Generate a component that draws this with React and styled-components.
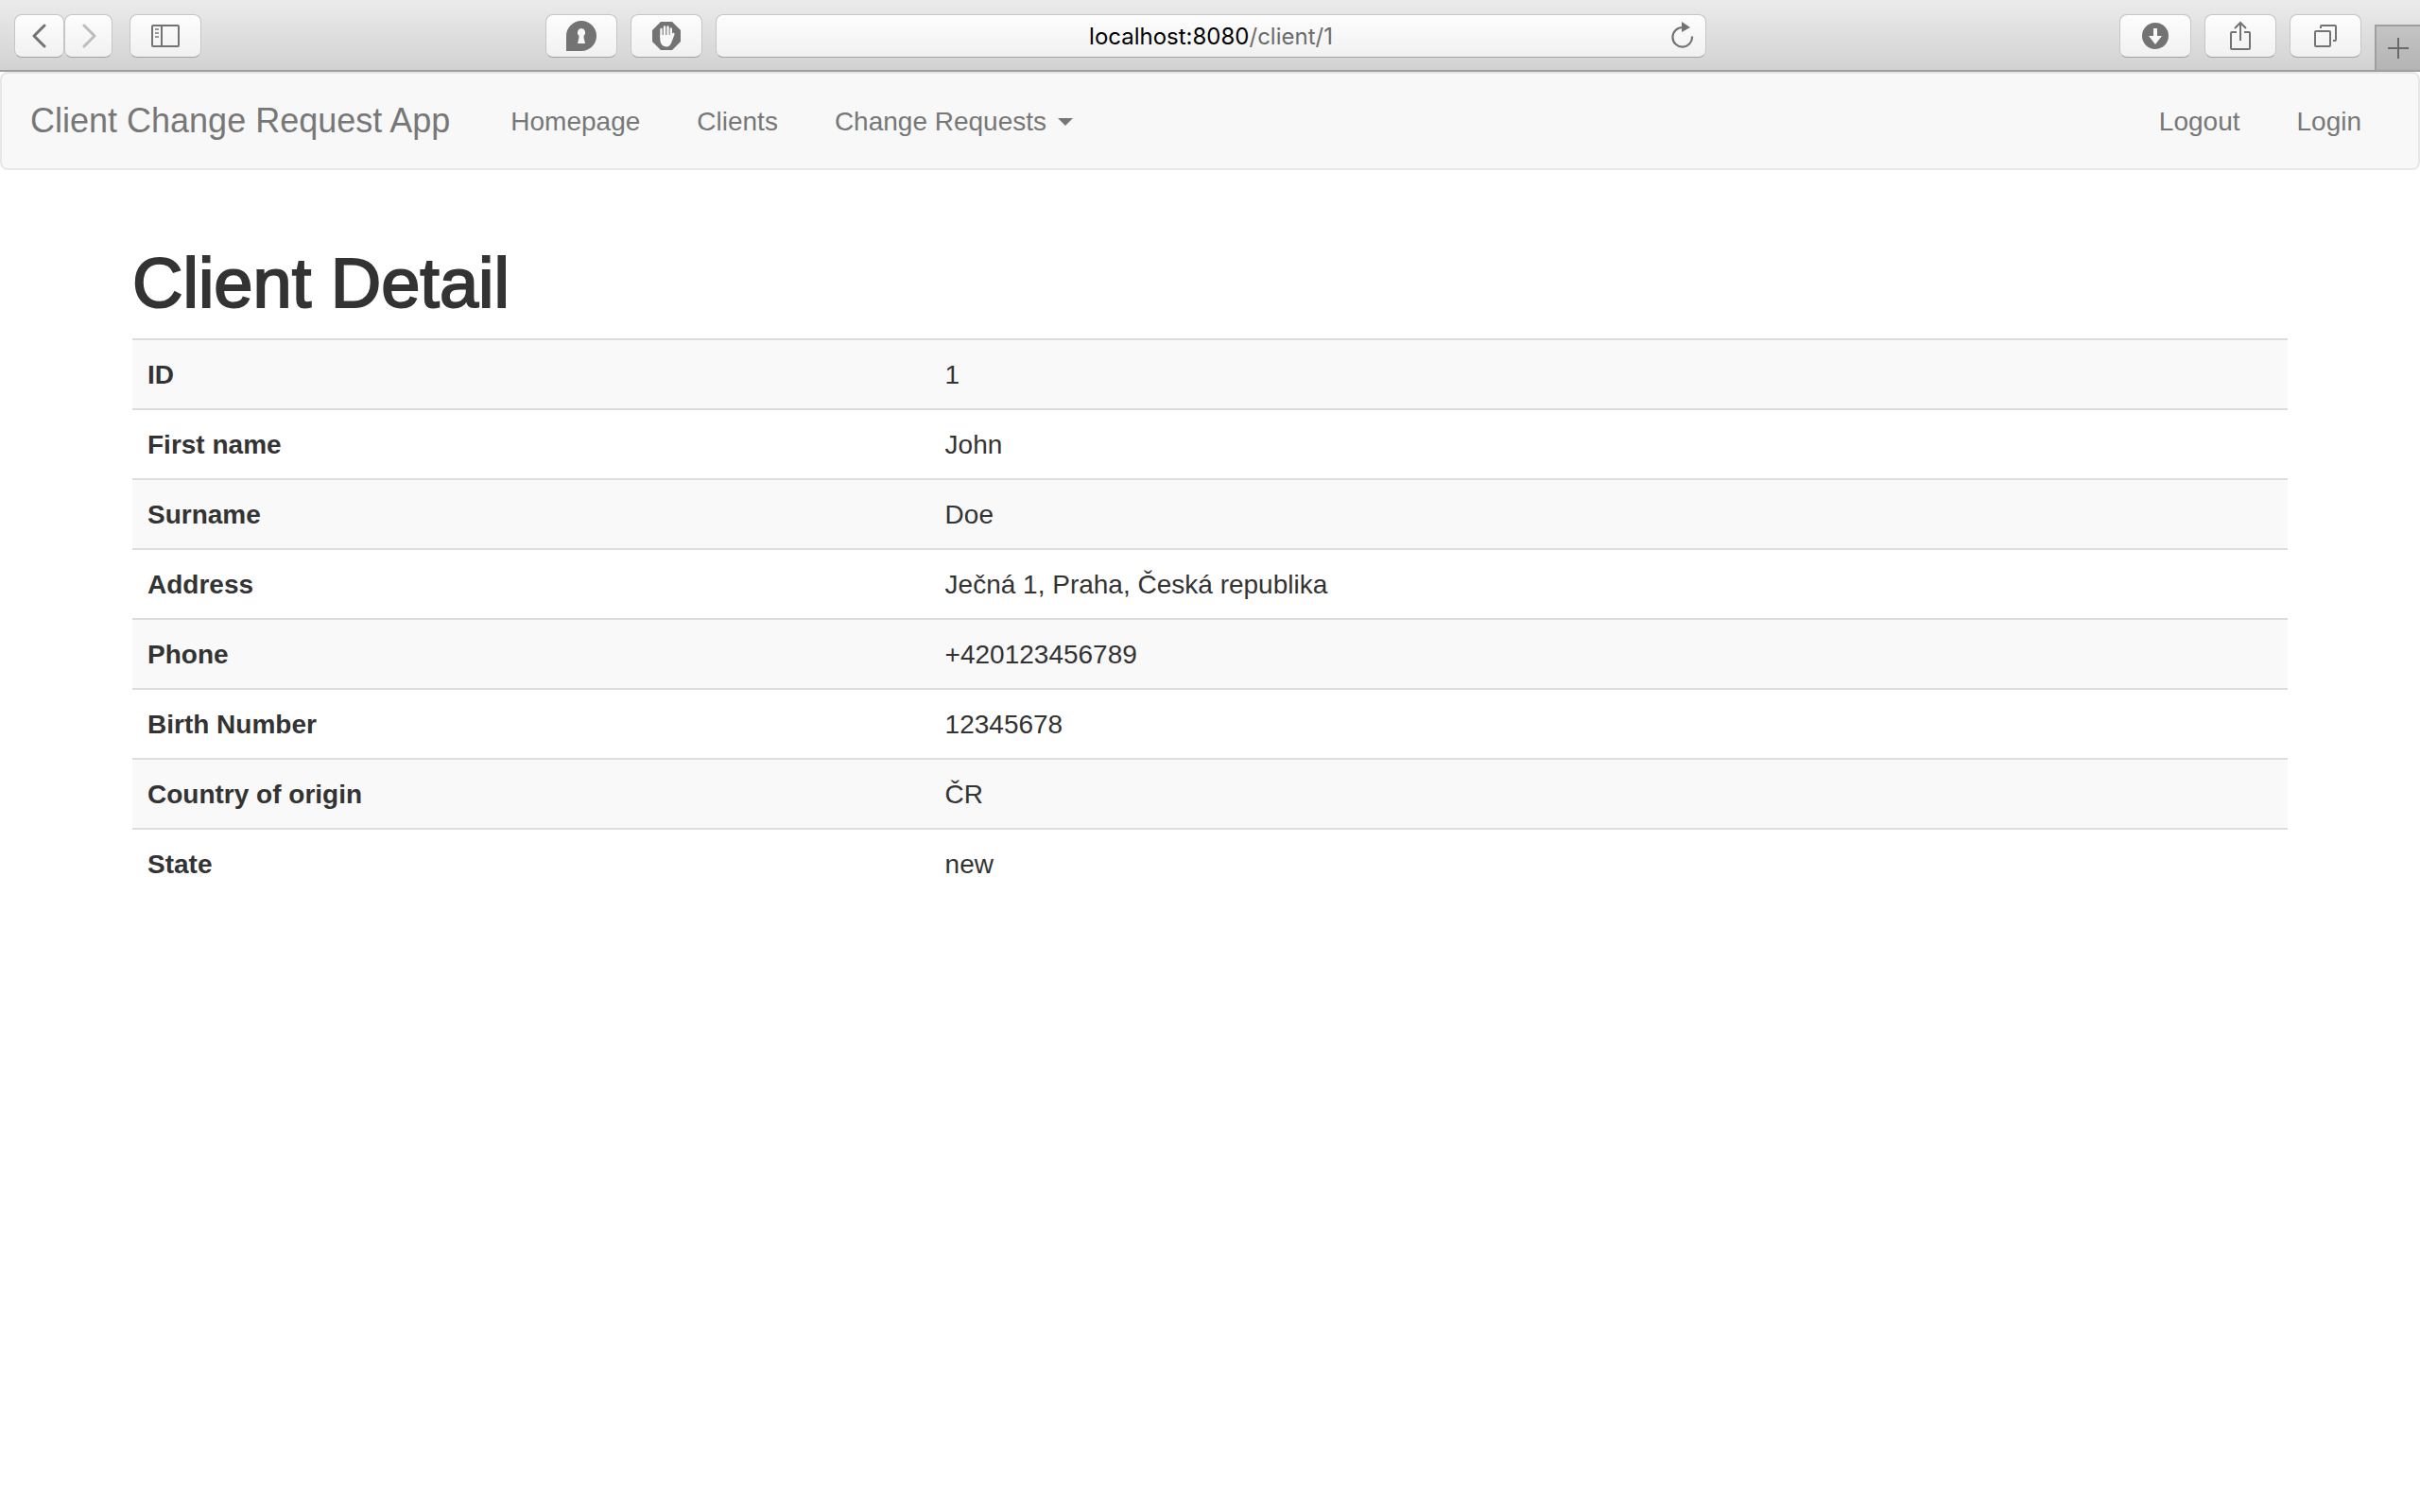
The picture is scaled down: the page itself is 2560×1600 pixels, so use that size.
import React from "react";
import styled, { createGlobalStyle } from "styled-components";

const GlobalStyle = createGlobalStyle`
  *, *::before, *::after { box-sizing: border-box; }
  body {
    margin: 0;
    background: #fff;
    color: #333;
    font-family: "Liberation Sans", Arial, sans-serif;
    font-size: 28px;
    line-height: 40px;
  }
`;

/* Browser toolbar */

const Toolbar = styled.header`
  display: grid;
  grid-template-columns: minmax(0, 1fr) minmax(0, 1048px) minmax(0, 1fr);
  column-gap: 14px;
  height: 76px;
  padding: 15px 0 0 2px;
  background: linear-gradient(#ebebeb, #d2d2d2);
  border-bottom: 2px solid #9f9f9f;
`;

const ToolGroup = styled.div`
  display: flex;
  align-items: flex-start;
  gap: ${(p) => p.$gap ?? 14}px;
`;

const LeftTools = styled(ToolGroup)`
  justify-content: space-between;
  padding-left: 13px;
`;

const RightTools = styled(ToolGroup)`
  justify-content: flex-end;
`;

const ToolButton = styled.button`
  display: flex;
  align-items: center;
  justify-content: center;
  width: ${(p) => p.$width || 76}px;
  height: 46px;
  padding: 0;
  border: 1px solid #c6c6c6;
  border-bottom-color: #a2a2a2;
  border-radius: 8px;
  background: linear-gradient(#fdfdfd, #f1f1f1);
  color: #737373;
`;

const AddressBar = styled.div`
  display: grid;
  grid-template-columns: 48px minmax(0, 1fr) 48px;
  align-items: center;
  height: 46px;
  padding-top: 2px;
  border: 1px solid #c6c6c6;
  border-bottom-color: #a2a2a2;
  border-radius: 8px;
  background: linear-gradient(#fdfdfd, #f1f1f1);
`;

const Address = styled.a`
  grid-column: 2;
  text-align: center;
  font-family: Inter, sans-serif;
  font-size: 24px;
  color: #6b6b6b;
  text-decoration: none;
`;

const Host = styled.span`
  color: #000;
`;

const ReloadButton = styled.button`
  display: flex;
  justify-content: center;
  padding: 0 0 4px;
  border: 0;
  background: none;
  color: #737373;
`;

const NewTabButton = styled.button`
  display: flex;
  align-items: center;
  justify-content: center;
  align-self: flex-end;
  width: 48px;
  height: 48px;
  padding: 0;
  border: solid #9f9f9f;
  border-width: 2px 0 0 2px;
  background: linear-gradient(#c4c4c4, #b4b4b4);
  color: #6a6a6a;
`;

function Icon({ children, width = 32, height = 32 }) {
  return (
    <svg
      width={width}
      height={height}
      viewBox={`0 0 ${width} ${height}`}
      fill="none"
      stroke="currentColor"
      strokeWidth="2"
      aria-hidden="true"
    >
      {children}
    </svg>
  );
}

const BackIcon = () => (
  <Icon width={18} height={26}>
    <path d="M14 2 3 13l11 11" strokeWidth="3" strokeLinecap="round" strokeLinejoin="round" />
  </Icon>
);

const ForwardIcon = () => (
  <Icon width={16} height={26}>
    <path d="M3 2l11 11L3 24" stroke="#bdbdbd" strokeWidth="3" strokeLinecap="round" strokeLinejoin="round" />
  </Icon>
);

const SidebarIcon = () => (
  <Icon width={30} height={24}>
    <rect x="1" y="1" width="28" height="22" rx="1" />
    <path d="M11 1v22" />
    <path d="M4 5h4M4 9h4M4 13h4" stroke="#999" />
  </Icon>
);

const KeyholeIcon = () => (
  <Icon>
    <path d="M0 32V16A16 16 0 1 1 16 32Z" fill="currentColor" stroke="none" />
    <path
      d="M16 8a4.300 4.300 0 0 1 2.600 7.600V18l1.400 6h-8l1.400-6v-2.400A4.300 4.300 0 0 1 16 8Z"
      fill="#f8f8f8"
      stroke="none"
    />
  </Icon>
);

const HandIcon = () => (
  <Icon width={30} height={30}>
    <path d="M9 0h12l9 9v12l-9 9H9l-9-9V9Z" fill="currentColor" stroke="none" />
    <g stroke="#f8f8f8" strokeLinecap="round">
      <path d="M9.500 16V8M13 14V5.500M16.500 14V5.500M19.800 15V7.500" strokeWidth="2.400" />
      <path d="M20 19l2.300-6" strokeWidth="2.600" />
    </g>
    <path
      d="M8.300 14h12.600l1.600-1.500-2 9c-1 3-3 5-5.500 5-4.500 0-6.700-4-6.700-8Z"
      fill="#f8f8f8"
      stroke="none"
    />
  </Icon>
);

const ReloadIcon = () => (
  <Icon width={24} height={28}>
    <path d="M22 15.500A10.300 10.300 0 1 1 12 6" strokeWidth="2.200" />
    <path d="M11 0l9 6-9 5Z" fill="currentColor" stroke="none" />
  </Icon>
);

const DownloadIcon = () => (
  <Icon width={28} height={28}>
    <circle cx="14" cy="14" r="14" fill="currentColor" stroke="none" />
    <path d="M12 6h4v8h5l-7 9-7-9h5Z" fill="#f8f8f8" stroke="none" />
  </Icon>
);

const ShareIcon = () => (
  <Icon width={24} height={34}>
    <path d="M8 13H3a1 1 0 0 0-1 1v16a1 1 0 0 0 1 1h18a1 1 0 0 0 1-1V14a1 1 0 0 0-1-1h-5" />
    <path d="M12 22V3M6 9l6-6 6 6" />
  </Icon>
);

const TabsIcon = () => (
  <Icon width={24} height={24}>
    <rect x="1" y="7" width="16" height="16" rx="1" />
    <path d="M7 4V2a1 1 0 0 1 1-1h14a1 1 0 0 1 1 1v14a1 1 0 0 1-1 1h-2" />
  </Icon>
);

const PlusIcon = () => (
  <Icon width={22} height={22}>
    <path d="M11 0v22M0 11h22" />
  </Icon>
);

/* Page */

const Navbar = styled.nav`
  display: flex;
  justify-content: space-between;
  padding: 0 30px;
  border: 2px solid #e7e7e7;
  border-radius: 8px;
  background: #f8f8f8;
`;

const NavGroup = styled.div`
  display: flex;
`;

const Brand = styled.a`
  padding: 30px 34px 30px 0;
  font-size: 36px;
  color: #777;
  text-decoration: none;
`;

const NavLink = styled.a`
  display: flex;
  align-items: center;
  gap: 12px;
  padding: 31px 30px 29px;
  color: #777;
  text-decoration: none;
`;

const Caret = styled.span`
  border: 8px solid transparent;
  border-top-color: currentColor;
  border-bottom-width: 0;
`;

const Container = styled.main`
  max-width: 2340px;
  margin: 0 auto;
  padding: 80px 30px 40px;
`;

const Title = styled.h1`
  margin: 0;
  padding-bottom: 18px;
  font-size: 74px;
  font-weight: 500;
  line-height: 80px;
  -webkit-text-stroke: 2px #333;
`;

const DetailTable = styled.table`
  width: 100%;
  border-spacing: 0;
  border-collapse: separate;
`;

const Row = styled.tr`
  &:nth-child(odd) {
    background: #f9f9f9;
  }
`;

const Label = styled.th`
  width: 37%;
  padding: 17px 16px 15px;
  border-top: 2px solid #ddd;
  text-align: left;
`;

const Value = styled.td`
  padding: 17px 16px 15px;
  border-top: 2px solid #ddd;
`;

const details = [
  ["ID", "1"],
  ["First name", "John"],
  ["Surname", "Doe"],
  ["Address", "Ječná 1, Praha, Česká republika"],
  ["Phone", "+420123456789"],
  ["Birth Number", "12345678"],
  ["Country of origin", "ČR"],
  ["State", "new"],
];

function BrowserToolbar() {
  return (
    <Toolbar>
      <LeftTools>
        <ToolGroup $gap={18}>
          <ToolGroup $gap={0}>
            <ToolButton $width={53} aria-label="Back"><BackIcon /></ToolButton>
            <ToolButton $width={51} aria-label="Forward"><ForwardIcon /></ToolButton>
          </ToolGroup>
          <ToolButton aria-label="Sidebar"><SidebarIcon /></ToolButton>
        </ToolGroup>
        <ToolGroup>
          <ToolButton aria-label="Passwords"><KeyholeIcon /></ToolButton>
          <ToolButton aria-label="Content blocker"><HandIcon /></ToolButton>
        </ToolGroup>
      </LeftTools>
      <AddressBar>
        <Address href="#"><Host>localhost:8080</Host>/client/1</Address>
        <ReloadButton aria-label="Reload"><ReloadIcon /></ReloadButton>
      </AddressBar>
      <RightTools>
        <ToolButton aria-label="Downloads"><DownloadIcon /></ToolButton>
        <ToolButton aria-label="Share"><ShareIcon /></ToolButton>
        <ToolButton aria-label="Show tabs"><TabsIcon /></ToolButton>
        <NewTabButton aria-label="New tab"><PlusIcon /></NewTabButton>
      </RightTools>
    </Toolbar>
  );
}

export default function App() {
  return (
    <>
      <GlobalStyle />
      <BrowserToolbar />
      <Navbar>
        <NavGroup>
          <Brand href="#">Client Change Request App</Brand>
          <NavLink href="#">Homepage</NavLink>
          <NavLink href="#">Clients</NavLink>
          <NavLink href="#">Change Requests<Caret /></NavLink>
        </NavGroup>
        <NavGroup>
          <NavLink href="#">Logout</NavLink>
          <NavLink href="#">Login</NavLink>
        </NavGroup>
      </Navbar>
      <Container>
        <Title>Client Detail</Title>
        <DetailTable>
          <tbody>
            {details.map(([label, value]) => (
              <Row key={label}>
                <Label scope="row">{label}</Label>
                <Value>{value}</Value>
              </Row>
            ))}
          </tbody>
        </DetailTable>
      </Container>
    </>
  );
}
